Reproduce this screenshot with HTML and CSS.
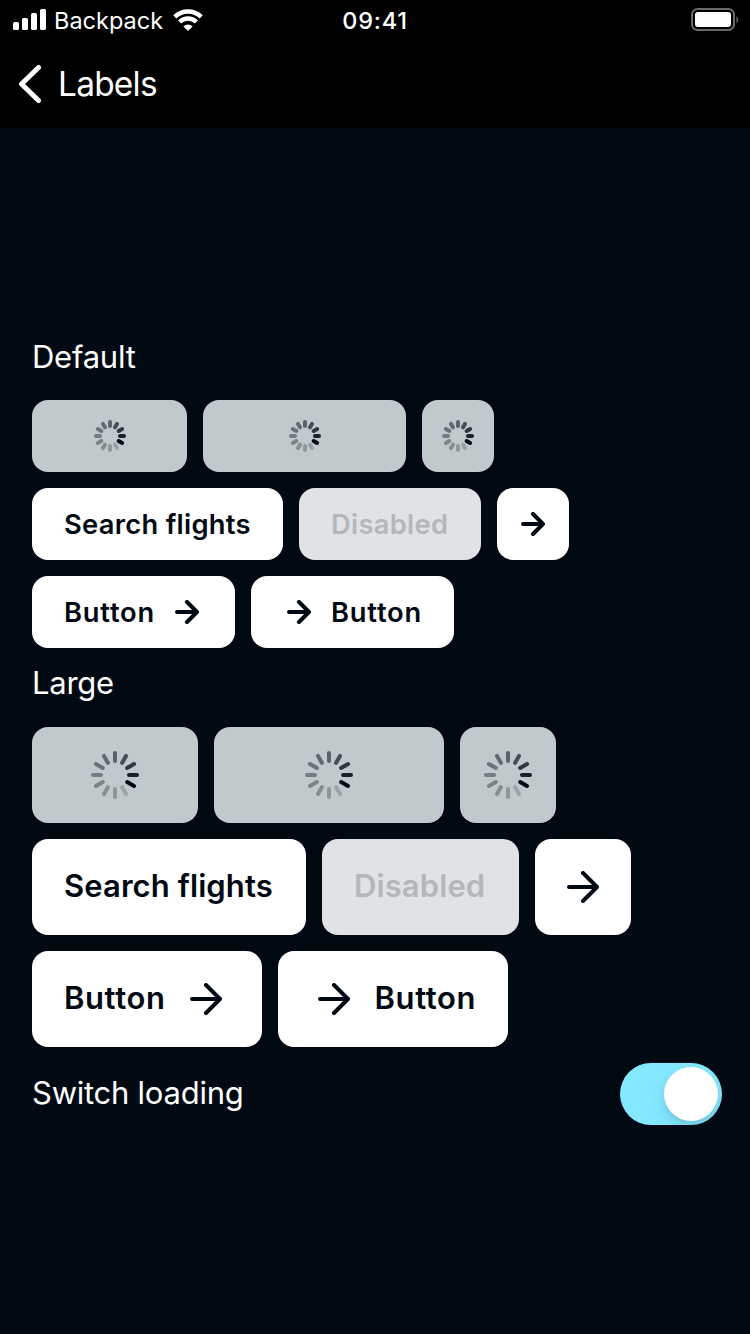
FILE: index.html
```
<!DOCTYPE html>
<html lang="en">
<head>
<meta charset="utf-8">
<title>Labels</title>
<link rel="stylesheet" href="styles.css">
</head>
<body>
<svg class="defs" aria-hidden="true">
  <symbol id="arrow-small" viewBox="0 0 24 24"><path d="M2 12H22M12 2L22 12L12 22"/></symbol>
  <symbol id="arrow-large" viewBox="0 0 32 32"><path d="M2 16H30M16 2L30 16L16 30"/></symbol>
  <symbol id="spinner-small" viewBox="-16 -16 32 32">
    <path stroke="#5b636b" d="M0-10V-14"/>
    <path stroke="#454d57" d="M0-10V-14" transform="rotate(30)"/>
    <path stroke="#303742" d="M0-10V-14" transform="rotate(60)"/>
    <path stroke="#1a212d" d="M0-10V-14" transform="rotate(90)"/>
    <path stroke="#020913" d="M0-10V-14" transform="rotate(120)"/>
    <path stroke="#9ba2a5" d="M0-10V-14" transform="rotate(150)"/>
    <path stroke="#90979b" d="M0-10V-14" transform="rotate(180)"/>
    <path stroke="#868d91" d="M0-10V-14" transform="rotate(210)"/>
    <path stroke="#7d8488" d="M0-10V-14" transform="rotate(240)"/>
    <path stroke="#757c83" d="M0-10V-14" transform="rotate(270)"/>
    <path stroke="#6b7279" d="M0-10V-14" transform="rotate(300)"/>
    <path stroke="#626970" d="M0-10V-14" transform="rotate(330)"/>
  </symbol>
  <symbol id="spinner-large" viewBox="-24 -24 48 48">
    <path stroke="#5b636b" d="M0-14V-22"/>
    <path stroke="#454d57" d="M0-14V-22" transform="rotate(30)"/>
    <path stroke="#303742" d="M0-14V-22" transform="rotate(60)"/>
    <path stroke="#1a212d" d="M0-14V-22" transform="rotate(90)"/>
    <path stroke="#020913" d="M0-14V-22" transform="rotate(120)"/>
    <path stroke="#9ba2a5" d="M0-14V-22" transform="rotate(150)"/>
    <path stroke="#90979b" d="M0-14V-22" transform="rotate(180)"/>
    <path stroke="#868d91" d="M0-14V-22" transform="rotate(210)"/>
    <path stroke="#7d8488" d="M0-14V-22" transform="rotate(240)"/>
    <path stroke="#757c83" d="M0-14V-22" transform="rotate(270)"/>
    <path stroke="#6b7279" d="M0-14V-22" transform="rotate(300)"/>
    <path stroke="#626970" d="M0-14V-22" transform="rotate(330)"/>
  </symbol>
</svg>

<header class="header">
  <div class="status">
    <div class="carrier">
      <svg class="signal" viewBox="0 0 33 21" fill="#fff">
        <rect x="0" y="13" width="6" height="8" rx="1.6"/>
        <rect x="9" y="9" width="6" height="12" rx="1.6"/>
        <rect x="18" y="4" width="6" height="17" rx="1.6"/>
        <rect x="27" y="0" width="6" height="21" rx="1.6"/>
      </svg>
      <span class="carrier-name">Backpack</span>
      <svg class="wifi" viewBox="0 0 30 22">
        <g fill="none" stroke="#fff" stroke-width="4.4">
          <path d="M1.8 7.8A19 19 0 0 1 28.2 7.8"/>
          <path d="M6.6 13A12 12 0 0 1 23.4 13"/>
        </g>
        <path fill="#fff" d="M15 22L10.4 17.4A6.6 6.6 0 0 1 19.6 17.4Z"/>
      </svg>
    </div>
    <span class="time">09:41</span>
    <svg class="battery" viewBox="0 0 48 23">
      <rect x="1" y="1" width="42" height="21" rx="5.5" fill="none" stroke="#6a6a6a" stroke-width="2"/>
      <rect x="4" y="4" width="36" height="15" rx="3" fill="#fff"/>
      <path d="M45.5 8A4.4 4.4 0 0 1 45.5 15Z" fill="#6a6a6a"/>
    </svg>
  </div>
  <nav class="nav">
    <svg class="back" viewBox="0 0 24 40"><path d="M20.5 3.5L3.5 20L20.5 36.5"/></svg>
    <h1 class="title">Labels</h1>
  </nav>
</header>

<main class="content">
  <h2 class="label">Default</h2>
  <section class="group">
    <div class="row">
      <button class="btn loading w155"><svg class="spinner"><use href="#spinner-small"/></svg></button>
      <button class="btn loading w203"><svg class="spinner"><use href="#spinner-small"/></svg></button>
      <button class="btn loading w72"><svg class="spinner"><use href="#spinner-small"/></svg></button>
    </div>
    <div class="row">
      <button class="btn w251"><span class="text">Search flights</span></button>
      <button class="btn disabled w182"><span class="text">Disabled</span></button>
      <button class="btn icon-only w72"><svg class="arrow"><use href="#arrow-small"/></svg></button>
    </div>
    <div class="row">
      <button class="btn w203"><span class="text short">Button</span><svg class="arrow"><use href="#arrow-small"/></svg></button>
      <button class="btn w203"><svg class="arrow"><use href="#arrow-small"/></svg><span class="text short">Button</span></button>
    </div>
  </section>

  <h2 class="label label-large">Large</h2>
  <section class="group large">
    <div class="row">
      <button class="btn loading w166"><svg class="spinner"><use href="#spinner-large"/></svg></button>
      <button class="btn loading w230"><svg class="spinner"><use href="#spinner-large"/></svg></button>
      <button class="btn loading w96"><svg class="spinner"><use href="#spinner-large"/></svg></button>
    </div>
    <div class="row">
      <button class="btn w274"><span class="text">Search flights</span></button>
      <button class="btn disabled w197"><span class="text">Disabled</span></button>
      <button class="btn icon-only w96"><svg class="arrow"><use href="#arrow-large"/></svg></button>
    </div>
    <div class="row">
      <button class="btn w230"><span class="text short">Button</span><svg class="arrow"><use href="#arrow-large"/></svg></button>
      <button class="btn w230"><svg class="arrow"><use href="#arrow-large"/></svg><span class="text short">Button</span></button>
    </div>
  </section>

  <div class="switch-row">
    <span class="switch-label">Switch loading</span>
    <div class="switch" role="switch" aria-checked="true"><span class="knob"></span></div>
  </div>
</main>
</body>
</html>
```
FILE: styles.css
```
* { box-sizing: border-box; }
body {
  margin: 0;
  width: 750px;
  height: 1334px;
  overflow: hidden;
  background: #010913;
  color: #fff;
  font-family: Inter, "Liberation Sans", sans-serif;
}
.defs { position: absolute; width: 0; height: 0; }
svg { display: block; flex: none; }
span { white-space: nowrap; }

.header { height: 128px; background: #000; }
.status {
  display: grid;
  grid-template-columns: 1fr auto 1fr;
  height: 40px;
  padding: 0 11px 0 13px;
  align-items: center;
}
.carrier { display: flex; align-items: center; }
.signal { width: 33px; height: 21px; margin-top: -1px; }
.carrier-name { margin-left: 8px; width: 110px; padding-top: 2px; font-size: 23.5px; line-height: 38px; letter-spacing: 0; }
.wifi { width: 30px; height: 22px; margin-left: 9px; }
.time { margin: 0 1px 0 -1px; padding-top: 2px; font-size: 23.5px; font-weight: 500; line-height: 38px; letter-spacing: 0.8px; }
.battery { width: 48px; height: 23px; justify-self: end; margin-top: -1px; }
.nav { display: flex; align-items: center; height: 88px; padding-left: 18px; }
.back { width: 24px; height: 40px; }
.back path { fill: none; stroke: #fff; stroke-width: 5; stroke-linecap: round; stroke-linejoin: round; }
.title { margin: 0 0 0 16px; font-size: 33.5px; font-weight: 400; line-height: 44px; letter-spacing: -0.8px; }

.content { padding: 208px 28px 0 32px; }
.label { margin: 0; height: 64px; line-height: 41px; font-size: 31px; font-weight: 400; letter-spacing: -0.25px; }
.label-large { height: 79px; line-height: 69px; }
.group { display: flex; flex-direction: column; gap: 16px; }
.row { display: flex; gap: 16px; }
.btn {
  display: flex;
  align-items: center;
  justify-content: space-between;
  flex: none;
  height: 72px;
  padding: 0 32px;
  border: 0;
  border-radius: 16px;
  background: #fff;
  color: #010913;
  font: 600 27.3px/40px Inter, "Liberation Sans", sans-serif;
  letter-spacing: 0.3px;
}
.text { padding-top: 2px; }
.short { letter-spacing: 0.8px; }
.large .btn { height: 96px; font-size: 31px; letter-spacing: 0.1px; }
.large .text { padding: 0 0 2px; }
.large .short { letter-spacing: 0.6px; }
.btn.loading, .btn.icon-only { justify-content: center; padding: 0; }
.loading { background: #c1c9cc; }
.disabled { background: #dfe3e6; color: #b2b7b9; }
.spinner { width: 32px; height: 32px; stroke-width: 4; stroke-linecap: round; }
.large .spinner { width: 48px; height: 48px; }
.arrow {
  width: 24px; height: 24px; margin: 0 4px;
  fill: none; stroke: #010913; stroke-width: 4; stroke-linecap: round; stroke-linejoin: round;
}
.large .arrow { width: 32px; height: 32px; margin: 0 8px; }
.w72 { width: 72px; }
.w96 { width: 96px; }
.w155 { width: 155px; }
.w166 { width: 166px; }
.w182 { width: 182px; }
.w197 { width: 197px; }
.w203 { width: 203px; }
.w230 { width: 230px; }
.w251 { width: 251px; }
.w274 { width: 274px; }

.switch-row { display: flex; justify-content: space-between; align-items: center; height: 62px; margin-top: 16px; }
.switch-label { padding-bottom: 2px; font-size: 31px; line-height: 40px; letter-spacing: -0.25px; }
.switch { display: flex; justify-content: flex-end; width: 102px; height: 62px; padding: 4px; border-radius: 31px; background: #84e9ff; overflow: hidden; }
.knob { width: 54px; height: 54px; border-radius: 50%; background: #fff; box-shadow: 0 6px 16px rgba(0, 0, 0, 0.13), 0 4px 2px rgba(0, 0, 0, 0.03); }
```
